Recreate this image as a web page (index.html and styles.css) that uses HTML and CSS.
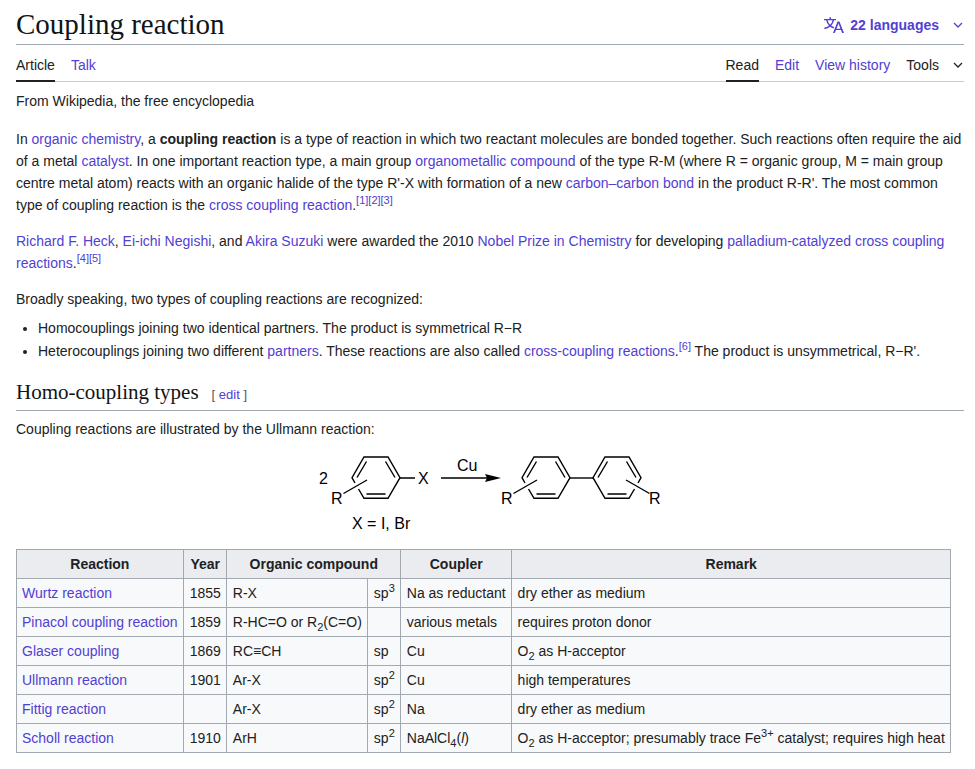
FILE: index.html
```html
<!DOCTYPE html>
<html lang="en">
<head>
<meta charset="utf-8">
<title>Coupling reaction - Wikipedia</title>
<link rel="stylesheet" href="styles.css">
</head>
<body>
<main class="page">
  <header class="titlebar">
    <h1>Coupling reaction</h1>
    <button class="menu-button languages" type="button">
      <svg class="lang-icon" viewBox="0 0 20 20" aria-hidden="true"><path d="M20 18h-1.440a.6.6 0 0 1-.4-.12.800.800 0 0 1-.230-.310L17 15h-5l-1 2.540a.800.800 0 0 1-.220.300.600.600 0 0 1-.400.140H9l4.550-11.470h1.890zm-3.530-4.310L14.890 9.500a11.600 11.600 0 0 1-.390-1.240q-.090.370-.190.690l-.190.560-1.580 4.190zm-6.300-1.580a13.400 13.400 0 0 1-2.910-1.410 11.460 11.460 0 0 0 2.810-5.370H12V4H7.310a4 4 0 0 0-.200-.560C6.870 2.790 6.600 2 6.600 2l-1.470.500s.400.890.600 1.500H0v1.330h2.150A11.230 11.230 0 0 0 5 10.700a17.200 17.200 0 0 1-5 2.100q.560.820.870 1.380a23.300 23.300 0 0 0 5.220-2.510 15.600 15.600 0 0 0 3.560 1.770zM3.630 5.330h4.910a8.110 8.110 0 0 1-2.450 4.450 9.110 9.110 0 0 1-2.460-4.450"/></svg>
      <span>22 languages</span>
      <svg class="chevron" viewBox="0 0 10 10" aria-hidden="true"><path d="M1 3l4 4 4-4"/></svg>
    </button>
  </header>
  <nav class="tabs" aria-label="Page">
    <div class="tab-group">
      <a class="tab current" href="#article">Article</a>
      <a class="tab" href="#talk">Talk</a>
    </div>
    <div class="tab-group">
      <a class="tab current" href="#read">Read</a>
      <a class="tab" href="#edit">Edit</a>
      <a class="tab" href="#history">View history</a>
      <button class="menu-button" type="button">
        <span>Tools</span>
        <svg class="chevron" viewBox="0 0 10 10" aria-hidden="true"><path d="M1 3l4 4 4-4"/></svg>
      </button>
    </div>
  </nav>
  <div class="tagline">From Wikipedia, the free encyclopedia</div>
  <article class="content">
    <p>In <a href="#oc">organic chemistry</a>, a <b>coupling reaction</b> is a type of reaction in which two reactant molecules are bonded together. Such reactions often require the aid of a metal <a href="#cat">catalyst</a>. In one important reaction type, a main group <a href="#om">organometallic compound</a> of the type R-M (where R = organic group, M = main group centre metal atom) reacts with an organic halide of the type R'-X with formation of a new <a href="#cc">carbon–carbon bond</a> in the product R-R'. The most common type of coupling reaction is the <a href="#ccr">cross coupling reaction</a>.<sup><a href="#r1">[1]</a><a href="#r2">[2]</a><a href="#r3">[3]</a></sup></p>
    <p><a href="#heck">Richard F. Heck</a>, <a href="#negishi">Ei-ichi Negishi</a>, and <a href="#suzuki">Akira Suzuki</a> were awarded the 2010 <a href="#nobel">Nobel Prize in Chemistry</a> for developing <a href="#pd">palladium-catalyzed cross coupling reactions</a>.<sup><a href="#r4">[4]</a><a href="#r5">[5]</a></sup></p>
    <p>Broadly speaking, two types of coupling reactions are recognized:</p>
    <ul>
      <li>Homocouplings joining two identical partners. The product is symmetrical R−R</li>
      <li>Heterocouplings joining two different <a href="#partners">partners</a>. These reactions are also called <a href="#cross">cross-coupling reactions</a>.<sup><a href="#r6">[6]</a></sup> The product is unsymmetrical, R−R'.</li>
    </ul>
    <div class="heading">
      <h2>Homo-coupling types</h2>
      <span class="edit-section">[ <a href="#edit-homo">edit</a> ]</span>
    </div>
    <p class="lead-in">Coupling reactions are illustrated by the Ullmann reaction:</p>
    <figure>
      <svg class="scheme" viewBox="0 0 360 96" role="img" aria-label="Ullmann reaction">
        <defs>
          <g id="ring">
            <path d="M3 26L0 20.700 12 0H36L48 20.700 36 41.300H12L6.500 32"/>
            <path d="M5 20.500L14.500 4.500M33.500 4.500L43 20.500M14.500 37H33.500"/>
            <path d="M-8.500 36.500L15 23"/>
          </g>
        </defs>
        <g class="bonds">
          <use href="#ring" x="42" y="12"/>
          <path d="M90 33H105M131 33H178"/>
          <use href="#ring" x="212" y="12"/>
          <path d="M259 33H284"/>
          <use href="#ring" transform="translate(331 12) scale(-1 1)"/>
        </g>
        <path d="M175 29L191 33 175 37 177 33Z"/>
        <g class="labels">
          <text x="9" y="39">2</text>
          <text x="21" y="59">R</text>
          <text x="108" y="39">X</text>
          <text x="147" y="26">Cu</text>
          <text x="42" y="84">X = I, Br</text>
          <text x="191" y="59">R</text>
          <text x="339" y="59">R</text>
        </g>
      </svg>
    </figure>
    <table>
      <thead>
        <tr><th>Reaction</th><th>Year</th><th colspan="2">Organic compound</th><th>Coupler</th><th>Remark</th></tr>
      </thead>
      <tbody>
        <tr><td><a href="#wurtz">Wurtz reaction</a></td><td>1855</td><td>R-X</td><td>sp<sup>3</sup></td><td>Na as reductant</td><td>dry ether as medium</td></tr>
        <tr><td><a href="#pinacol">Pinacol coupling reaction</a></td><td>1859</td><td>R-HC=O or R<sub>2</sub>(C=O)</td><td></td><td>various metals</td><td>requires proton donor</td></tr>
        <tr><td><a href="#glaser">Glaser coupling</a></td><td>1869</td><td>RC≡CH</td><td>sp</td><td>Cu</td><td>O<sub>2</sub> as H-acceptor</td></tr>
        <tr><td><a href="#ullmann">Ullmann reaction</a></td><td>1901</td><td>Ar-X</td><td>sp<sup>2</sup></td><td>Cu</td><td>high temperatures</td></tr>
        <tr><td><a href="#fittig">Fittig reaction</a></td><td></td><td>Ar-X</td><td>sp<sup>2</sup></td><td>Na</td><td>dry ether as medium</td></tr>
        <tr><td><a href="#scholl">Scholl reaction</a></td><td>1910</td><td>ArH</td><td>sp<sup>2</sup></td><td>NaAlCl<sub>4</sub>(<i>l</i>)</td><td>O<sub>2</sub> as H-acceptor; presumably trace Fe<sup>3+</sup> catalyst; requires high heat</td></tr>
      </tbody>
    </table>
  </article>
</main>
</body>
</html>
```
FILE: styles.css
```css
* { box-sizing: border-box; }

body {
  margin: 0;
  background: #fff;
  color: #202122;
  font: 14px/22px "Liberation Sans", Arial, sans-serif;
}

.page { padding: 5px 11px 16px 16px; }

a { color: #5140d3; text-decoration: none; }

.titlebar {
  display: flex;
  justify-content: space-between;
  align-items: center;
  height: 40px;
  border-bottom: 1px solid #a2a9b1;
}

h1, h2 {
  margin: 0;
  color: #101418;
  font-family: "Liberation Serif", "Times New Roman", serif;
  font-weight: normal;
}

h1 { font-size: 29px; line-height: 38px; padding-bottom: 2px; }

.menu-button {
  display: flex;
  align-items: center;
  padding: 0;
  border: 0;
  background: none;
  color: #202122;
  font: inherit;
}

.languages { color: #5140d3; font-weight: bold; }

.lang-icon { width: 20px; height: 20px; margin-right: 6px; fill: currentColor; }

.chevron {
  width: 10px;
  height: 10px;
  margin: 0 1px 0 14px;
  fill: none;
  stroke: currentColor;
  stroke-width: 1.3;
}

.tabs {
  display: flex;
  justify-content: space-between;
  height: 37px;
  border-bottom: 1px solid #c8ccd1;
}

.tab-group { display: flex; gap: 16px; }

.tab { height: 37px; padding-top: 9px; }

.tab.current { color: #202122; border-bottom: 2px solid #202122; }

.tabs .menu-button { height: 40px; }

.tagline { margin-top: 8px; }

.content { padding-top: 2px; }

.content p { margin: 14px 0; }

.content ul { margin: -7px 0 0; padding-left: 22px; }

.content li { margin-bottom: 1px; }

sup, sub { font-size: 11px; line-height: 1; }

.heading {
  display: flex;
  align-items: baseline;
  gap: 13px;
  margin-top: 15px;
  padding-bottom: 3px;
  border-bottom: 1px solid #a2a9b1;
}

h2 { font-size: 21px; line-height: 30px; }

.edit-section { color: #54595d; font-size: 13px; }

.content .lead-in { margin: 7px 0 5px; }

figure { display: flex; justify-content: center; margin: 0; }

.scheme { width: 360px; height: 96px; }

.bonds { fill: none; stroke: #000; stroke-width: 1.4; }

.labels { font-size: 16px; }

table {
  margin-top: 8px;
  border-collapse: collapse;
  background: #f8f9fa;
}

th, td { border: 1px solid #a2a9b1; padding: 3px 5px 3px 6px; text-align: left; }

th { background: #eaecf0; text-align: center; }

th:first-child, td:first-child { padding-left: 5px; }
```
